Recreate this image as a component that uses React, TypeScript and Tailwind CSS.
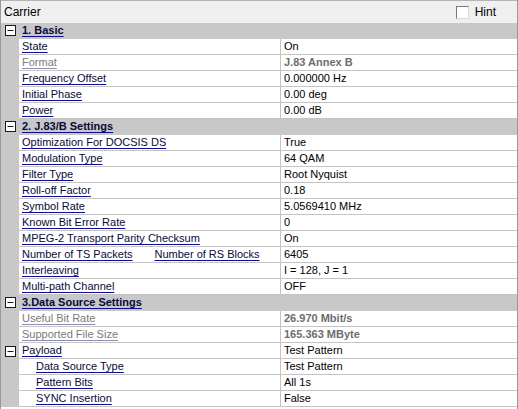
import React from "react";

type Row =
  | { kind: "section"; label: string }
  | {
      kind: "prop";
      label: string;
      value: string;
      disabled?: boolean;
      indent?: boolean;
      expand?: boolean;
      extra?: string;
    };

const rows: Row[] = [
  { kind: "section", label: "1. Basic" },
  { kind: "prop", label: "State", value: "On" },
  { kind: "prop", label: "Format", value: "J.83 Annex B", disabled: true },
  { kind: "prop", label: "Frequency Offset", value: "0.000000 Hz" },
  { kind: "prop", label: "Initial Phase", value: "0.00 deg" },
  { kind: "prop", label: "Power", value: "0.00 dB" },
  { kind: "section", label: "2. J.83/B Settings" },
  { kind: "prop", label: "Optimization For DOCSIS DS", value: "True" },
  { kind: "prop", label: "Modulation Type", value: "64 QAM" },
  { kind: "prop", label: "Filter Type", value: "Root Nyquist" },
  { kind: "prop", label: "Roll-off Factor", value: "0.18" },
  { kind: "prop", label: "Symbol Rate", value: "5.0569410 MHz" },
  { kind: "prop", label: "Known Bit Error Rate", value: "0" },
  { kind: "prop", label: "MPEG-2 Transport Parity Checksum", value: "On" },
  { kind: "prop", label: "Number of TS Packets", value: "6405", extra: "Number of RS Blocks" },
  { kind: "prop", label: "Interleaving", value: "I = 128, J = 1" },
  { kind: "prop", label: "Multi-path Channel", value: "OFF" },
  { kind: "section", label: "3.Data Source Settings" },
  { kind: "prop", label: "Useful Bit Rate", value: "26.970 Mbit/s", disabled: true },
  { kind: "prop", label: "Supported File Size", value: "165.363 MByte", disabled: true },
  { kind: "prop", label: "Payload", value: "Test Pattern", expand: true },
  { kind: "prop", label: "Data Source Type", value: "Test Pattern", indent: true },
  { kind: "prop", label: "Pattern Bits", value: "All 1s", indent: true },
  { kind: "prop", label: "SYNC Insertion", value: "False", indent: true },
];

function MinusBox() {
  return (
    <svg width="11" height="11" viewBox="0 0 11 11" className="block">
      <rect x="0.5" y="0.5" width="10" height="10" fill="#ffffff" stroke="#1a1a1a" />
      <line x1="2.5" y1="5.5" x2="8.5" y2="5.5" stroke="#1a1a1a" />
    </svg>
  );
}

function Label({ text, disabled, bold }: { text: string; disabled?: boolean; bold?: boolean }) {
  return (
    <span
      className={`underline underline-offset-[2px] whitespace-nowrap ${
        disabled ? "text-[#7a7a7a] decoration-[#8a8ad0]" : "text-[#0a0a3c] decoration-[#0000ff]"
      } ${bold ? "font-bold" : ""}`}
    >
      {text}
    </span>
  );
}

export default function App() {
  return (
    <div
      className="w-[518px] h-[409px] overflow-hidden bg-white text-[11px] leading-none text-black border-l border-r border-[#9a9a9a] flex flex-col"
      style={{ fontFamily: '"Liberation Sans", Arial, sans-serif' }}
    >
      {/* Title bar */}
      <div className="h-[23px] shrink-0 bg-[#f0f0f0] border-t border-[#b4b4b4] flex items-center justify-between pl-[3px] pr-[21px] text-[12px]">
        <span>Carrier</span>
        <label className="flex items-center gap-[6px]">
          <span className="w-[13px] h-[13px] bg-white border border-[#7a7a7a] border-r-[#d8d8d8] border-b-[#d8d8d8]" />
          <span>Hint</span>
        </label>
      </div>

      {/* Property grid */}
      <div className="flex flex-col">
        {rows.map((r, i) =>
          r.kind === "section" ? (
            <div key={i} className="h-[16px] flex items-center bg-[#c8c8c8] border-b border-[#c8c8c8]">
              <div className="w-[18px] shrink-0 flex justify-center">
                <MinusBox />
              </div>
              <span className="pl-[3px]">
                <Label text={r.label} bold />
              </span>
            </div>
          ) : (
            <div key={i} className="h-[16px] flex">
              <div className="w-[18px] shrink-0 bg-[#c8c8c8] flex items-center justify-center">
                {r.expand && <MinusBox />}
              </div>
              <div
                className={`w-[262px] shrink-0 flex items-center border-b border-r border-[#c4c4c4] ${
                  r.indent ? "pl-[17px]" : "pl-[3px]"
                }`}
              >
                <Label text={r.label} disabled={r.disabled} />
                {r.extra && (
                  <span className="ml-[22px]">
                    <Label text={r.extra} />
                  </span>
                )}
              </div>
              <div
                className={`flex-1 flex items-center pl-[3px] border-b border-[#c4c4c4] whitespace-nowrap ${
                  r.disabled ? "font-bold text-[#6d6d6d]" : ""
                }`}
              >
                {r.value}
              </div>
            </div>
          )
        )}
      </div>
    </div>
  );
}
